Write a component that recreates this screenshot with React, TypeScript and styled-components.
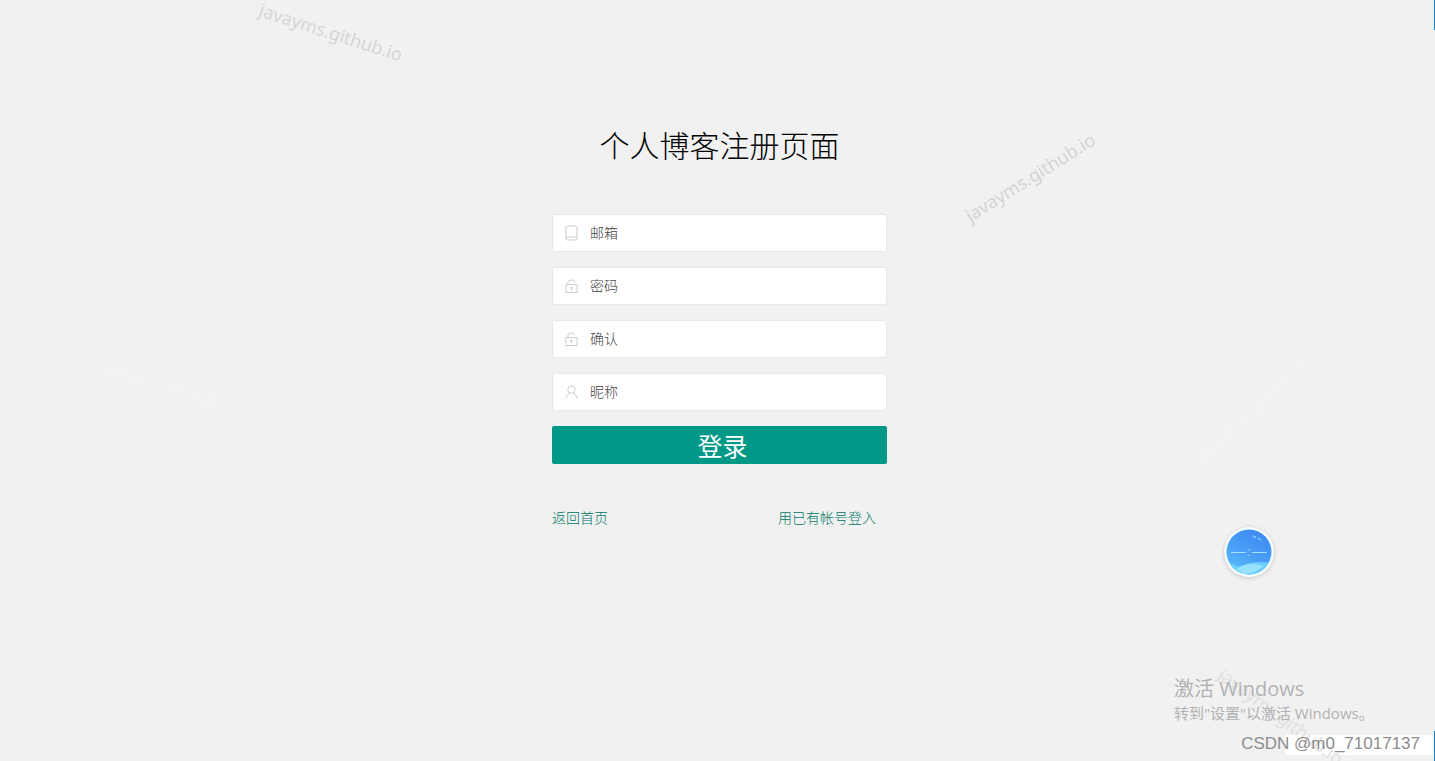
import React from "react";
import styled, { createGlobalStyle } from "styled-components";

const GlobalStyle = createGlobalStyle`
  * { box-sizing: border-box; }
  html, body { margin: 0; min-height: 100%; background: #f1f1f1; }
  body { font-family: "Noto Sans", "Noto Sans CJK SC", sans-serif; }
`;

const Page = styled.div`
  position: relative;
  min-height: 100vh;
  overflow: hidden;
  padding: 124px 0 0 4px;
  background: #f1f1f1;
  box-shadow: inset 0 2px 0 #edf3f5;
`;

const Main = styled.main`
  width: 335px;
  max-width: 100%;
  margin: 0 auto;
`;

const Title = styled.h1`
  margin: 0 0 50px;
  font-family: "Noto Sans CJK SC", sans-serif;
  font-size: 30px;
  font-weight: 300;
  line-height: 40px;
  text-align: center;
  color: #000;
`;

const Form = styled.form`
  display: flex;
  flex-direction: column;
  gap: 15px;
`;

const Field = styled.label`
  display: flex;
  align-items: center;
  gap: 12px;
  height: 38px;
  padding: 0 12px;
  background: #fff;
  border: 1px solid #e8e8e8;
  border-radius: 3px;
  color: #c8c8c8;
`;

const FieldIcon = styled.svg`
  flex: none;
  width: 13px;
  height: 18px;
  fill: none;
  stroke: currentColor;
`;

const Input = styled.input`
  flex: 1;
  min-width: 0;
  height: 36px;
  padding: 0 0 2px;
  border: 0;
  outline: 0;
  background: transparent;
  font-family: "Noto Sans CJK SC", sans-serif;
  font-size: 14px;
  font-weight: 300;
  color: #333;
  &::placeholder { color: #444; opacity: 1; }
`;

const Submit = styled.button`
  height: 38px;
  padding: 0 0 0 6px;
  border: 0;
  border-radius: 2px;
  background: #009987;
  color: #fff;
  font-family: "Noto Sans CJK SC", sans-serif;
  font-size: 25px;
  line-height: 38px;
  cursor: pointer;
`;

const Links = styled.nav`
  display: flex;
  justify-content: space-between;
  margin-top: 43px;
  padding-right: 11px;
`;

const TextLink = styled.a`
  font-family: "Noto Sans CJK SC", sans-serif;
  font-size: 14px;
  font-weight: 300;
  line-height: 20px;
  color: #017767;
  text-decoration: none;
`;

const Watermark = styled.span<{ $x: number; $y: number; $angle: number; $color: string }>`
  position: absolute;
  left: ${(p) => p.$x}px;
  top: ${(p) => p.$y}px;
  font-family: "Noto Sans", sans-serif;
  font-size: 18px;
  line-height: 24px;
  white-space: nowrap;
  color: ${(p) => p.$color};
  transform: translate(-50%, -50%) rotate(${(p) => p.$angle}deg);
  pointer-events: none;
`;

const Orb = styled.button`
  position: absolute;
  right: 161px;
  bottom: 184px;
  width: 50px;
  height: 50px;
  padding: 0;
  border: 0;
  border-radius: 50%;
  background: #f4fdff;
  box-shadow: 0 1px 4px rgba(0, 0, 0, 0.18);
  cursor: pointer;
  svg { display: block; }
`;

const Activation = styled.aside`
  position: absolute;
  right: 60px;
  bottom: 36px;
  width: 201px;
  color: #b2b2b2;
  font-family: "Open Sans", "Noto Sans CJK SC", sans-serif;
  white-space: nowrap;
`;

const ActivationTitle = styled.p`
  margin: 0;
  font-size: 20px;
  line-height: 24px;
`;

const ActivationHint = styled.p`
  margin: 0;
  font-size: 15px;
  line-height: 24px;
`;

const Strip = styled.div`
  position: absolute;
  right: 2px;
  bottom: 6px;
  width: 148px;
  height: 20px;
  background: #fff;
`;

const Credit = styled.div`
  position: absolute;
  right: 15px;
  bottom: 6px;
  font-family: "Liberation Sans", sans-serif;
  font-size: 17px;
  line-height: 22px;
  color: #8c8c8c;
`;

const EdgeMark = styled.div<{ $bottom?: boolean }>`
  position: absolute;
  right: 0;
  ${(p) => (p.$bottom ? "bottom: 0;" : "top: 0;")}
  width: 1px;
  height: 30px;
  background: #1287c9;
`;

const icons = {
  tablet: (
    <>
      <rect x="1" y="1.5" width="12" height="15" rx="1.5" />
      <path d="M1 13.5h12" />
    </>
  ),
  lock: (
    <>
      <rect x="1" y="7.5" width="12" height="8.500" />
      <path d="M3 7.500V5.500Q3 2.500 7 2.500Q10.500 2.500 11 5M7 10v3.500M5.500 11h3" />
    </>
  ),
  user: (
    <>
      <circle cx="7" cy="6.500" r="4" />
      <path d="M1 16Q1.500 12 5 10.500M9 10.500Q12.500 12 13 16" />
    </>
  ),
};

const fields: { name: string; label: string; type: string; icon: keyof typeof icons }[] = [
  { name: "email", label: "邮箱", type: "email", icon: "tablet" },
  { name: "password", label: "密码", type: "password", icon: "lock" },
  { name: "confirm", label: "确认", type: "password", icon: "lock" },
  { name: "nickname", label: "昵称", type: "text", icon: "user" },
];

const marks = [
  { x: 331, y: 32, angle: 18, color: "#d6d6d6" },
  { x: 1030, y: 177, angle: -32, color: "#d4d4d4" },
  { x: 165, y: 385, angle: 18, color: "#f4f4f4" },
  { x: 1250, y: 410, angle: -44, color: "#f4f4f4" },
  { x: 1281, y: 716, angle: 36, color: "#e0e0e0" },
];

export default function App() {
  return (
    <>
      <GlobalStyle />
      <Page>
        <Main>
          <Title>个人博客注册页面</Title>
          <Form onSubmit={(e) => e.preventDefault()}>
            {fields.map((f) => (
              <Field key={f.name} htmlFor={f.name}>
                <FieldIcon viewBox="0 0 14 18" aria-hidden="true">
                  {icons[f.icon]}
                </FieldIcon>
                <Input id={f.name} name={f.name} type={f.type} placeholder={f.label} aria-label={f.label} />
              </Field>
            ))}
            <Submit type="submit">登录</Submit>
          </Form>
          <Links>
            <TextLink href="#home">返回首页</TextLink>
            <TextLink href="#login">用已有帐号登入</TextLink>
          </Links>
        </Main>

        <Strip />
        {marks.map((m) => (
          <Watermark key={`${m.x}-${m.y}`} $x={m.x} $y={m.y} $angle={m.angle} $color={m.color} aria-hidden="true">
            javayms.github.io
          </Watermark>
        ))}

        <Orb type="button" aria-label="助手">
          <svg width="50" height="50" viewBox="0 0 50 50">
            <defs>
              <linearGradient id="sky" x1="0.8" y1="0" x2="0.2" y2="1">
                <stop offset="0" stopColor="#3c86f2" />
                <stop offset="0.55" stopColor="#4a9ff6" />
                <stop offset="1" stopColor="#5cc4fb" />
              </linearGradient>
              <clipPath id="disc">
                <circle cx="25" cy="25" r="22.500" />
              </clipPath>
            </defs>
            <g clipPath="url(#disc)">
              <rect width="50" height="50" fill="url(#sky)" />
              <path d="M4 36Q10 37 16 40Q28 33 48 36V50H4Z" fill="#6cccfb" />
              <path d="M12 42Q24 34 40 39Q32 46 20 47Z" fill="#97e3fd" />
            </g>
            <path d="M7 25.500H22M28 25.500H43" stroke="#a5e2ff" />
            <path d="M24 23.500l1-1 1 1M24 27.500l1 1 1-1" stroke="#b5edff" fill="none" />
            <path d="M29 9l3 1.500M34 11l3 2" stroke="#8bc8fb" strokeWidth="1.500" />
          </svg>
        </Orb>

        <Activation>
          <ActivationTitle>激活 Windows</ActivationTitle>
          <ActivationHint>转到"设置"以激活 Windows。</ActivationHint>
        </Activation>
        <Credit>CSDN @m0_71017137</Credit>
        <EdgeMark />
        <EdgeMark $bottom />
      </Page>
    </>
  );
}
